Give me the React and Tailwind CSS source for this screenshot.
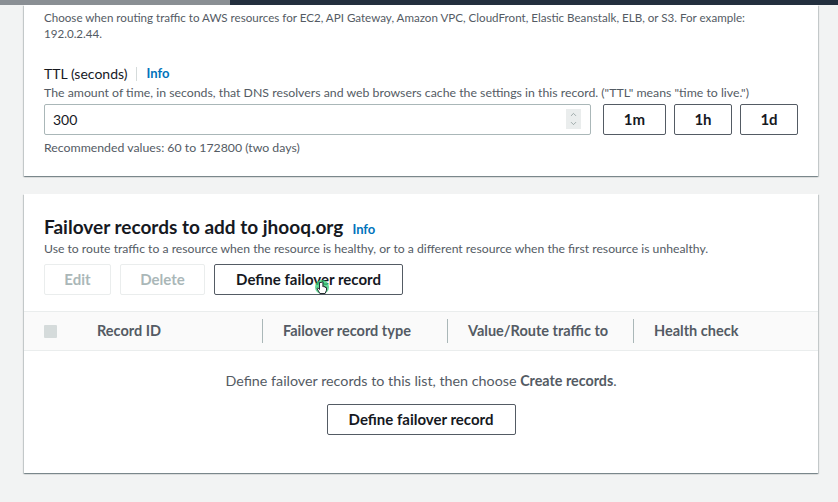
import React from "react";
import { ChevronUp, ChevronDown } from "lucide-react";

const cardShadow =
  "shadow-[0_1px_1px_0_rgba(0,28,36,0.3),1px_1px_1px_0_rgba(0,28,36,0.15),-1px_1px_1px_0_rgba(0,28,36,0.15)]";

const Info = () => (
  <span className="text-[13px] font-bold text-[#0073bb]">Info</span>
);

const Btn = ({ children, disabled, className = "" }) => (
  <button
    className={
      "h-[31px] rounded-[2px] border text-[15px] font-bold " +
      (disabled
        ? "border-[#eaeded] text-[#aab7b8] bg-white "
        : "border-[#545b64] text-[#16191f] bg-white ") +
      className
    }
  >
    {children}
  </button>
);

const App = () => {
  const columns = [
    { label: "Record ID", w: "w-[198px]", pl: "pl-[33px]" },
    { label: "Failover record type", w: "w-[185px]", pl: "pl-[20px]" },
    { label: "Value/Route traffic to", w: "w-[186px]", pl: "pl-[20px]" },
    { label: "Health check", w: "flex-1", pl: "pl-[20px]" },
  ];

  return (
    <div
      className="w-[838px] h-[502px] overflow-hidden bg-[#f2f3f3] text-[#16191f]"
      style={{ fontFamily: 'Lato, "Noto Sans", sans-serif' }}
    >
      <div className="h-[5px] bg-[#232f3e] flex">
        <div className="w-[230px] h-[5px] bg-[#8a8f94]" />
      </div>

      {/* TTL card */}
      <div className={"ml-[24px] w-[794px] bg-white " + cardShadow}>
        <div className="px-[20px] pt-[5px] pb-[20px]">
          <p className="text-[11.6px] leading-[16px] text-[#545b64]">
            Choose when routing traffic to AWS resources for EC2, API Gateway,
            Amazon VPC, CloudFront, Elastic Beanstalk, ELB, or S3. For example:
            192.0.2.44.
          </p>

          <div className="mt-[22px] flex items-center gap-[9px]">
            <span className="text-[14px] leading-[18px]">TTL (seconds)</span>
            <span className="h-[14px] w-px bg-[#d5dbdb]" />
            <Info />
          </div>
          <p className="mt-[1px] text-[12.3px] leading-[16px] text-[#545b64]">
            The amount of time, in seconds, that DNS resolvers and web browsers
            cache the settings in this record. ("TTL" means "time to live.")
          </p>

          <div className="mt-[3px] flex gap-[8px]">
            <div className="w-[547px] h-[31px] border border-[#aab7b8] rounded-[2px] flex items-center justify-between pl-[8px] pr-[9px]">
              <span className="text-[14px]">300</span>
              <span className="w-[15px] h-[20px] bg-[#eaeded] flex flex-col items-center justify-center text-[#879596]">
                <ChevronUp size={9} strokeWidth={2} />
                <ChevronDown size={9} strokeWidth={2} />
              </span>
            </div>
            <Btn className="ml-[4px] w-[63px]">1m</Btn>
            <Btn className="w-[58px]">1h</Btn>
            <Btn className="w-[58px]">1d</Btn>
          </div>

          <p className="mt-[5px] text-[12.3px] leading-[16px] text-[#545b64]">
            Recommended values: 60 to 172800 (two days)
          </p>
        </div>
      </div>

      {/* Failover card */}
      <div className={"mt-[18px] ml-[24px] w-[794px] h-[279px] bg-white " + cardShadow}>
        <div className="px-[20px] pt-[21px]">
          <div className="flex items-baseline gap-[9px]">
            <h2 className="text-[19px] leading-[24px] font-bold">
              Failover records to add to jhooq.org
            </h2>
            <Info />
          </div>
          <p className="mt-[2px] text-[12.2px] leading-[16px] text-[#545b64]">
            Use to route traffic to a resource when the resource is healthy, or
            to a different resource when the first resource is unhealthy.
          </p>
          <div className="mt-[7px] flex gap-[9px] relative">
            <Btn disabled className="w-[67px]">Edit</Btn>
            <Btn disabled className="w-[85px]">Delete</Btn>
            <Btn className="w-[189px]">Define failover record</Btn>
            <div className="absolute left-[271px] top-[16px] w-[14px] h-[14px] rounded-full bg-[#3bd07a] opacity-80" />
            <svg
              className="absolute left-[272px] top-[17px]"
              width="12"
              height="14"
              viewBox="0 0 12 14"
            >
              <path
                d="M3.5 1.5v7l-1.2-1.2c-.6-.6-1.5 0-1 .8l2.6 4.4h5.2l1.4-3.3V6.8c0-.8-1.2-.8-1.2 0v-.7c0-.8-1.2-.8-1.2 0V5.6c0-.8-1.2-.8-1.2 0V1.5c0-.8-1.4-.8-1.4 0z"
                fill="white"
                stroke="#16191f"
                strokeWidth="0.9"
              />
            </svg>
          </div>
        </div>

        <div className="mt-[16px] h-[40px] bg-[#fafafa] border-t border-b border-[#eaeded] flex items-center">
          <div className="pl-[20px] w-[40px] flex items-center">
            <span className="w-[13px] h-[13px] bg-[#d5dbdb] rounded-[1px]" />
          </div>
          {columns.map((c, i) => (
            <div
              key={c.label}
              className={c.w + " " + c.pl + " h-[24px] flex items-center " + (i > 0 ? "border-l border-[#aab7b8]" : "")}
            >
              <span className="text-[14.5px] font-bold text-[#545b64]">{c.label}</span>
            </div>
          ))}
        </div>

        <div className="flex flex-col items-center pt-[21px]">
          <p className="text-[14.3px] leading-[18px] text-[#545b64]">
            Define failover records to this list, then choose{" "}
            <span className="font-bold">Create records</span>.
          </p>
          <Btn className="mt-[14px] w-[189px]">Define failover record</Btn>
        </div>
      </div>
    </div>
  );
};

export default App;
